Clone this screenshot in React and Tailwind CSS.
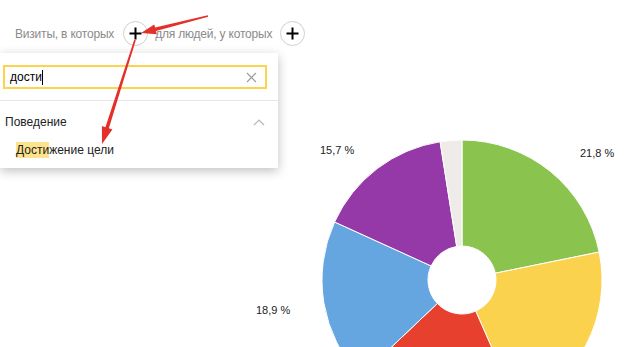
import React from "react";

const FONT = { fontFamily: '"Liberation Sans", Arial, sans-serif' };

function PlusButton() {
  return (
    <div className="w-[25px] h-[25px] rounded-full border border-[#d0d0d0] bg-white flex items-center justify-center shrink-0">
      <svg width="13" height="13" viewBox="0 0 13 13">
        <path d="M6.5 0.5v12M0.5 6.5h12" stroke="#000" strokeWidth="2" />
      </svg>
    </div>
  );
}

function arrowPoints(tx, ty, hx, hy, headLen = 14, headHalf = 5, tailW = 0.8, baseW = 1.6) {
  const dx = hx - tx, dy = hy - ty;
  const L = Math.hypot(dx, dy);
  const ux = dx / L, uy = dy / L;
  const nx = -uy, ny = ux;
  const bx = hx - ux * headLen, by = hy - uy * headLen;
  const p = [
    [tx + nx * tailW, ty + ny * tailW],
    [bx + nx * baseW, by + ny * baseW],
    [bx + nx * headHalf, by + ny * headHalf],
    [hx, hy],
    [bx - nx * headHalf, by - ny * headHalf],
    [bx - nx * baseW, by - ny * baseW],
    [tx - nx * tailW, ty - ny * tailW],
  ];
  return p.map((q) => q.map((v) => v.toFixed(1)).join(",")).join(" ");
}

const slices = [
  { v: 21.8, c: "#8bc34f" },
  { v: 21.6, c: "#fbd24e" },
  { v: 19.5, c: "#e8402f" },
  { v: 18.9, c: "#65a6e0" },
  { v: 15.7, c: "#9539a8" },
  { v: 2.5, c: "#efebe8" },
];

function slicePath(cx, cy, R, r, a0, a1) {
  const rad = (a) => (a * Math.PI) / 180;
  const pt = (rr, a) => [cx + rr * Math.sin(rad(a)), cy - rr * Math.cos(rad(a))];
  const large = a1 - a0 > 180 ? 1 : 0;
  const [x0, y0] = pt(R, a0);
  const [x1, y1] = pt(R, a1);
  const [x2, y2] = pt(r, a1);
  const [x3, y3] = pt(r, a0);
  return `M${x0} ${y0} A${R} ${R} 0 ${large} 1 ${x1} ${y1} L${x2} ${y2} A${r} ${r} 0 ${large} 0 ${x3} ${y3} Z`;
}

function Pie() {
  const cx = 462, cy = 227, R = 140, r = 34;
  let acc = 0;
  const total = slices.reduce((s, x) => s + x.v, 0);
  return (
    <svg width="633" height="294" className="block">
      {slices.map((s, i) => {
        const a0 = (acc / total) * 360;
        acc += s.v;
        const a1 = (acc / total) * 360;
        return <path key={i} d={slicePath(cx, cy, R, r, a0, a1)} fill={s.c} stroke="#fff" strokeWidth="1" strokeLinejoin="round" />;
      })}
      <text x="320" y="101" fontSize="11" fill="#222" style={FONT}>15,7 %</text>
      <text x="580" y="104" fontSize="11" fill="#222" style={FONT}>21,8 %</text>
      <text x="256" y="261" fontSize="11" fill="#222" style={FONT}>18,9 %</text>
    </svg>
  );
}

export default function App() {
  return (
    <div className="relative w-[633px] h-[347px] overflow-hidden bg-white" style={FONT}>
      <div className="flex items-center h-[53px] pl-[15px] pt-[21px] pb-[7px]">
        <span className="text-[12px] tracking-[-0.2px] text-[#8a8a8a]">Визиты, в которых</span>
        <div className="ml-[9px]"><PlusButton /></div>
        <span className="ml-[7px] text-[12px] tracking-[-0.2px] text-[#8a8a8a]">для людей, у которых</span>
        <div className="ml-[8px]"><PlusButton /></div>
      </div>
      <Pie />

      <div className="absolute left-0 top-[53px] w-[278px] h-[115px] bg-white shadow-[0_3px_10px_rgba(0,0,0,0.25)]">
        <div className="pt-[12px] pl-[3px] pr-[11px] pb-[11px] border-b border-[#e6e6e6]">
          <div className="h-[24px] border-2 border-[#fcd34f] flex items-center pl-[5px] pr-[8px]">
            <span className="text-[12px] text-black">дости</span>
            <span className="w-px h-[15px] bg-black"></span>
            <span className="flex-1"></span>
            <svg width="11" height="11" viewBox="0 0 11 11">
              <path d="M1 1l9 9M10 1l-9 9" stroke="#999" strokeWidth="1.1" />
            </svg>
          </div>
        </div>
        <div className="flex items-center justify-between pl-[5px] pr-[13px] pt-[12px]">
          <span className="text-[12px] text-[#222]">Поведение</span>
          <svg width="12" height="7" viewBox="0 0 12 7">
            <path d="M1 6l5-5 5 5" stroke="#b5b5b5" strokeWidth="1.2" fill="none" />
          </svg>
        </div>
        <div className="pl-[16px] pt-[11px] text-[12px] leading-[16px] text-[#222]">
          <span className="bg-[#fde48c] inline-block">Дости</span>жение цели
        </div>
      </div>

      <svg className="absolute left-0 top-0 pointer-events-none" width="633" height="347">
        <polygon points={arrowPoints(208, 16, 141, 33, 15, 5, 0.8, 1.8)} fill="#e5302a" />
        <polygon points={arrowPoints(135, 40, 102, 144, 17, 5.5, 0.8, 1.8)} fill="#e5302a" />
      </svg>
    </div>
  );
}
